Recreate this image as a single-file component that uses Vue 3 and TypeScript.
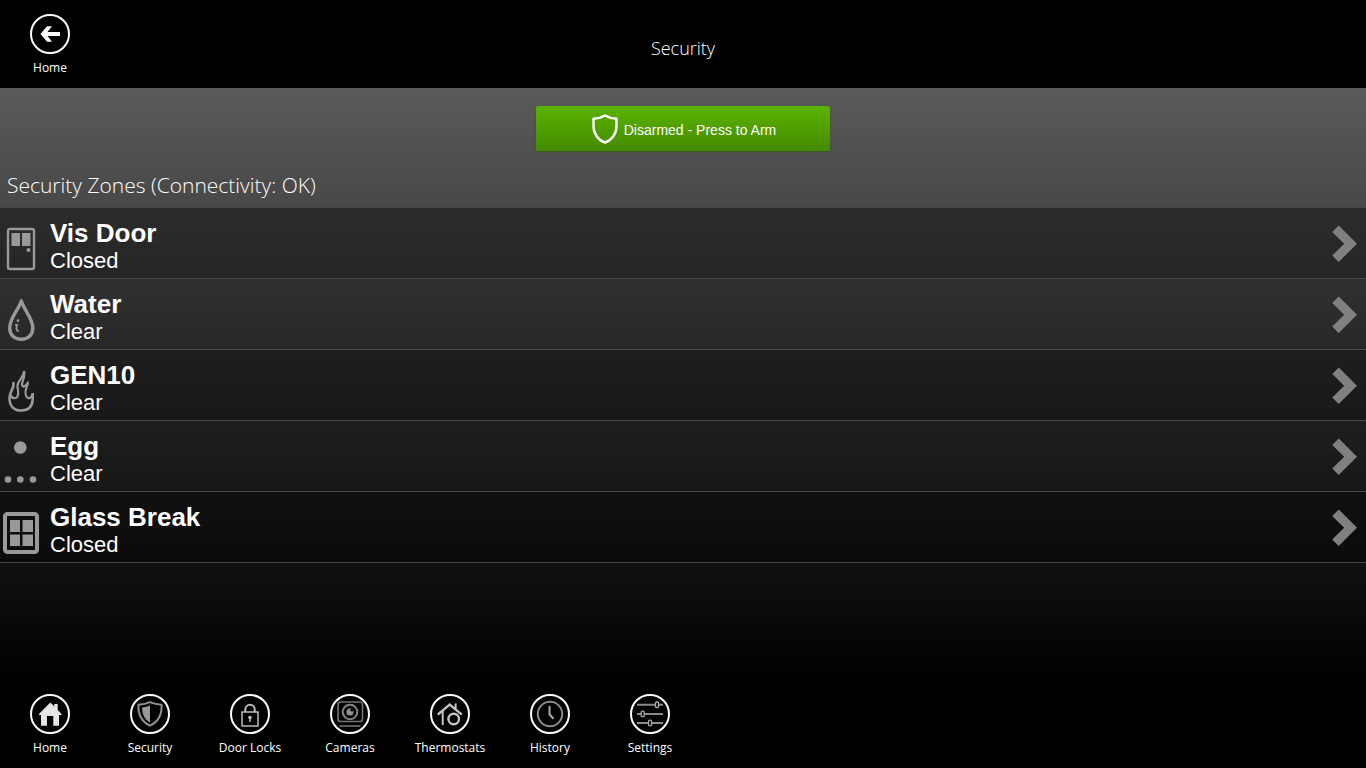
<script setup lang="ts">
type ZoneKind = 'door' | 'water' | 'fire' | 'motion' | 'window'

interface Zone {
  name: string
  status: string
  kind: ZoneKind
}

const zones: Zone[] = [
  { name: 'Vis Door', status: 'Closed', kind: 'door' },
  { name: 'Water', status: 'Clear', kind: 'water' },
  { name: 'GEN10', status: 'Clear', kind: 'fire' },
  { name: 'Egg', status: 'Clear', kind: 'motion' },
  { name: 'Glass Break', status: 'Closed', kind: 'window' },
]

const tabs: string[] = ['Home', 'Security', 'Door Locks', 'Cameras', 'Thermostats', 'History', 'Settings']
</script>

<template>
  <div class="app">
    <header class="top">
      <a href="#home" class="round-link">
        <svg class="round" viewBox="0 0 40 40" aria-hidden="true">
          <circle class="ring" cx="20" cy="20" r="19" />
          <path fill="#fff" d="M10.5 20 17 12.3H22L17.5 18H30V22H17.5L22 27.7H17Z" />
        </svg>
        <span>Home</span>
      </a>
      <h1>Security</h1>
      <div></div>
    </header>

    <main>
      <div class="arm-bar">
        <button type="button" class="arm">
          <svg class="arm-icon" viewBox="0 0 26 30" aria-hidden="true">
            <path
              d="M13 1.5Q18 4.5 24.5 4.7V12C24.5 20 19.5 26.5 13 28.5C6.5 26.5 1.5 20 1.5 12V4.7Q8 4.5 13 1.5Z"
              fill="none" stroke="#fff" stroke-width="2.4" stroke-linejoin="round" />
          </svg>
          <span>Disarmed - Press to Arm</span>
        </button>
      </div>

      <h2>Security Zones (Connectivity: OK)</h2>

      <ul class="zones">
        <li v-for="zone in zones" :key="zone.name">
          <button type="button" class="zone">
            <svg class="zone-icon" viewBox="0 0 44 70" aria-hidden="true">
              <g v-if="zone.kind === 'door'">
                <rect x="8" y="21" width="26" height="40" rx="2" fill="none" stroke="#999" stroke-width="2.4" />
                <path fill="#999" d="M11.5 25h8.5v13h-8.5zM22 25h8.5v13h-8.5z" />
                <circle cx="28.5" cy="42" r="2" fill="#999" />
              </g>
              <g v-else-if="zone.kind === 'water'" fill="none" stroke="#999">
                <path stroke-width="3.4" stroke-linejoin="round" d="M21.3 22C18.5 31 9.7 39 9.7 49C9.7 56 14.5 60.2 21.3 60.2S32.8 56 32.8 49C32.8 39 24 31 21.3 22Z" />
                <path stroke-width="1.8" d="M15 45.8H17Q15.3 52 18.8 52.2" />
                <circle cx="18" cy="41.7" r="1.4" fill="#999" stroke="none" />
              </g>
              <g v-else-if="zone.kind === 'fire'" fill="none" stroke="#999" stroke-width="2.6" stroke-linejoin="round">
                <path d="M13.3 32C15 38 9.5 41 9.5 48C9.5 56 14 60.5 21 60.5S32.5 57 32.7 49V43" />
                <path stroke-width="2.2" d="M24 21C24 28 17.5 30 17.5 36C17.5 40 19.5 43 17.5 46.5C16 49 12 49 10.5 45" />
                <path stroke-width="2.2" d="M24 21C25.5 27 22 31 22 34.5C22.5 38 25 37 28 32.5C27.5 37 25 39 25.5 43C26 49 30.5 50.5 32.5 44" />
              </g>
              <g v-else-if="zone.kind === 'motion'" fill="#999">
                <circle cx="20.3" cy="26.5" r="6.3" />
                <circle cx="8" cy="58.5" r="3.3" />
                <circle cx="20.3" cy="58.5" r="3.3" />
                <circle cx="33" cy="58.5" r="3.3" />
              </g>
              <g v-else>
                <rect x="5" y="22" width="32" height="38" rx="2.5" fill="none" stroke="#999" stroke-width="4" />
                <path fill="#999" d="M10 28h10v12H10zM22.5 28h10.5v12H22.5zM10 42.5h10v11.5H10zM22.5 42.5h10.5v11.5H22.5z" />
              </g>
            </svg>
            <span class="zone-text">
              <strong>{{ zone.name }}</strong>
              <span>{{ zone.status }}</span>
            </span>
            <svg class="chevron" viewBox="0 0 26 38" aria-hidden="true">
              <path fill="#808080" d="M6.7 1.5 25 19.7 6.7 38 .2 31.5 12.2 19.7 .2 8Z" />
            </svg>
          </button>
        </li>
      </ul>
    </main>

    <nav class="tabs">
      <a v-for="tab in tabs" :key="tab" :href="'#' + tab.toLowerCase().replace(' ', '-')" class="round-link">
        <svg class="round" viewBox="0 0 40 40" aria-hidden="true">
          <circle class="ring" cx="20" cy="20" r="19" />
          <path
            v-if="tab === 'Home'" fill="#e6e6e6"
            d="M20.3 8.5 24.3 12.5V10H27.7V16L31.5 20V21H29V31.7H23.3V22H17V31.7H11V21H9V20Z" />
          <g v-else-if="tab === 'Security'">
            <path
              fill="none" stroke="#909090" stroke-width="2" stroke-linejoin="round"
              d="M20 8.2Q25 10.5 31.6 10.7C32 21 28 28 20 31.5C12 28 8 21 8.4 10.7Q15 10.5 20 8.2Z" />
            <path fill="#999" d="M20 11.5V28.5C14.5 25.5 12 20 12.2 13.5Q16.5 13.2 20 11.5Z" />
          </g>
          <g v-else-if="tab === 'Door Locks'" fill="none" stroke="#bbb" stroke-width="1.5">
            <rect x="12" y="18" width="16" height="14" />
            <path stroke-width="2" d="M15.3 18V15.5A4.7 4.7 0 0 1 24.7 15.5V18" />
            <circle cx="20" cy="23.5" r="1.8" fill="#bbb" stroke="none" />
            <path d="M20 24v4" />
          </g>
          <g v-else-if="tab === 'Cameras'" fill="none" stroke="#737373" stroke-width="1.6">
            <rect x="8" y="8" width="24.5" height="19.5" rx="2.5" />
            <circle cx="20" cy="18" r="7.3" stroke="#858585" stroke-width="2" />
            <circle cx="20" cy="18" r="3.5" fill="#909090" stroke="none" />
            <circle cx="21.7" cy="16.3" r="1.3" fill="#000" stroke="none" />
            <path d="M9.7 32H30.3" />
          </g>
          <g v-else-if="tab === 'Thermostats'" fill="none" stroke="#c4c4c4" stroke-width="2">
            <path stroke-width="2.4" d="M7.7 20.7 19.7 10.5 31.8 20.7" />
            <path d="M25.6 16V9.5M12.7 17V31" />
            <circle cx="23.7" cy="25" r="5.3" stroke-width="2.4" />
          </g>
          <g v-else-if="tab === 'History'" fill="none" stroke="#8a8a8a" stroke-width="2">
            <circle cx="20" cy="20" r="12.2" />
            <path stroke="#aaa" d="M19.5 12V20.5L23.5 24.8" />
          </g>
          <g v-else fill="#000" stroke="#8a8a8a" stroke-width="2">
            <path d="M7 10.7H33M7 20H33M7 29H33" />
            <g stroke-width="1.3" stroke="#aaa">
              <rect x="25.5" y="8" width="3" height="5.5" rx="1" />
              <rect x="11.2" y="17.2" width="3" height="5.5" rx="1" />
              <rect x="18.5" y="26.2" width="3" height="5.5" rx="1" />
            </g>
          </g>
        </svg>
        <span>{{ tab }}</span>
      </a>
    </nav>
  </div>
</template>

<style>
body {
  margin: 0;
  background: #000;
}
</style>

<style scoped>
.app {
  min-height: 100vh;
  display: flex;
  flex-direction: column;
  background: #000;
  color: #fff;
  font-family: "Open Sans", "Noto Sans", sans-serif;
}

.top {
  display: grid;
  grid-template-columns: 100px 1fr 100px;
  min-height: 88px;
}

.top h1 {
  margin: 0;
  align-self: center;
  padding-top: 8px;
  text-align: center;
  font: 300 18px/24px "Open Sans", sans-serif;
}

.round-link {
  width: 100px;
  padding-top: 14px;
  display: flex;
  flex-direction: column;
  align-items: center;
  gap: 6px;
  color: #fff;
  font-size: 12px;
  line-height: 16px;
  text-decoration: none;
  white-space: nowrap;
}

.round {
  width: 40px;
  height: 40px;
}

.ring {
  fill: none;
  stroke: #fff;
  stroke-width: 2;
}

main {
  flex: 1;
  background: linear-gradient(#5a5a5a, #000);
}

.arm-bar {
  display: flex;
  justify-content: center;
  padding-top: 18px;
}

.arm {
  width: 294px;
  height: 45px;
  padding: 0 0 0 2px;
  display: flex;
  align-items: center;
  justify-content: center;
  gap: 6px;
  border: 0;
  border-radius: 2px;
  background: linear-gradient(#5ab300, #458a00);
  box-shadow: 0 1px 2px #3a5a1a;
  color: #fff;
  font: 14px/20px "Liberation Sans", Arial, sans-serif;
}

.arm span {
  padding-top: 2px;
}

.arm-icon {
  width: 26px;
  height: 30px;
}

h2 {
  margin: 0;
  padding: 20px 7px 8px;
  font: 300 21px/28px "Open Sans", sans-serif;
}

.zones {
  margin: 0;
  padding: 0;
  list-style: none;
  border-top: 1px solid #444;
}

.zones li {
  border-bottom: 1px solid #484848;
  background: rgba(0, 0, 0, 0.38);
}

.zones li:nth-child(even) {
  background: rgba(0, 0, 0, 0.2);
}

.zone {
  width: 100%;
  height: 70px;
  padding: 0 8px 0 0;
  display: flex;
  align-items: center;
  border: 0;
  background: none;
  color: #fff;
  font: 22px/26px "Liberation Sans", Arial, sans-serif;
  text-align: left;
}

.zone-icon {
  width: 44px;
  height: 70px;
}

.zone-text {
  flex: 1;
  padding: 6px 0 0 6px;
  display: flex;
  flex-direction: column;
}

.zone-text strong {
  font-size: 26px;
  line-height: 30px;
}

.chevron {
  width: 26px;
  height: 38px;
}

.tabs {
  min-height: 88px;
  display: flex;
}
</style>
